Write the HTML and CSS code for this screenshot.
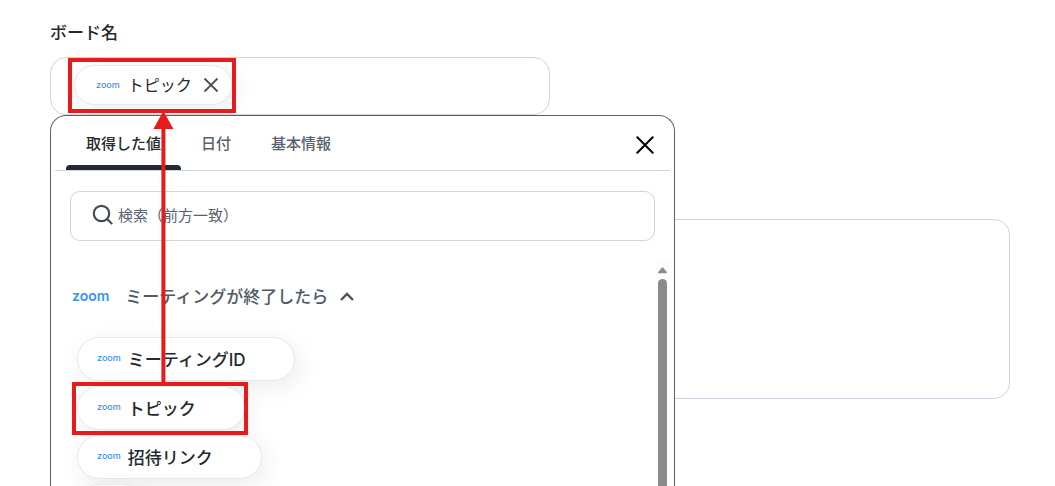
FILE: index.html
```html
<!DOCTYPE html>
<html lang="ja">
<head>
<meta charset="utf-8">
<meta name="viewport" content="width=device-width, initial-scale=1">
<title>ボード名</title>
<link rel="stylesheet" href="styles.css">
</head>
<body>
<main class="form">
  <h1 class="form-label">ボード名</h1>
  <div class="field">
    <div class="chip">
      <span class="zoom zoom-small">zoom</span>
      <span class="chip-text">トピック</span>
      <button class="icon-button" type="button" aria-label="削除">
        <svg width="16" height="16" viewBox="0 0 16 16" fill="none" stroke="#4a525c" stroke-width="1.8"><path d="M1.5 1.5l13 13M14.5 1.5l-13 13"/></svg>
      </button>
    </div>
    <section class="picker">
      <header class="tabs">
        <button class="tab tab-active" type="button">取得した値</button>
        <button class="tab" type="button">日付</button>
        <button class="tab" type="button">基本情報</button>
        <button class="icon-button close" type="button" aria-label="閉じる">
          <svg width="18" height="18" viewBox="0 0 18 18" fill="none" stroke="#000" stroke-width="2" stroke-linecap="round"><path d="M1.3 1.3l15.4 15.4M16.7 1.3L1.3 16.7"/></svg>
        </button>
      </header>
      <label class="search">
        <svg width="22" height="22" viewBox="0 0 22 22" fill="none" stroke="#434b55" stroke-width="2.2"><circle cx="9.5" cy="9.5" r="7.7"/><path d="M15 15l5.2 5"/></svg>
        <input class="search-input" type="text" aria-label="検索" placeholder="検索（前方一致）">
      </label>
      <div class="results">
        <div class="list">
          <button class="group" type="button">
            <span class="zoom">zoom</span>
            <span class="group-text">ミーティングが終了したら</span>
            <svg width="14" height="9" viewBox="0 0 14 9" fill="none" stroke="#4a525c" stroke-width="2.4"><path d="M1 8l6-6 6 6"/></svg>
          </button>
          <button class="item" type="button"><span class="zoom zoom-small">zoom</span>ミーティングID</button>
          <button class="item" type="button"><span class="zoom zoom-small">zoom</span>トピック</button>
          <button class="item" type="button"><span class="zoom zoom-small">zoom</span>招待リンク</button>
          <div class="item"></div>
        </div>
        <div class="scrollbar">
          <svg width="9" height="7" viewBox="0 0 9 7" fill="#8b8b8b"><path d="M3.8.7q.7-.8 1.4 0L8.8 5q.4 1.3-.8 1.3H1Q-.2 6.3.2 5z"/></svg>
          <div class="thumb"></div>
        </div>
      </div>
    </section>
  </div>
  <textarea class="body-field" aria-label="内容"></textarea>
</main>
<div class="mark mark-target"></div>
<div class="mark mark-source"></div>
<svg class="arrow" width="22" height="272" viewBox="0 0 22 272" fill="#e81b1b"><path d="M11.4 0l10 18h-8v254h-4V18h-8z"/></svg>
</body>
</html>
```
FILE: styles.css
```css
* {
  box-sizing: border-box;
}

body {
  margin: 0;
  height: 100vh;
  position: relative;
  overflow: hidden;
  background: #fff;
  color: #23292f;
  font-family: "Noto Sans CJK JP", sans-serif;
}

button {
  margin: 0;
  padding: 0;
  border: 0;
  background: none;
  color: inherit;
  font: inherit;
  cursor: pointer;
}

svg {
  display: block;
  flex: none;
}

.form {
  padding: 20px 45px 0 50px;
}

.form-label {
  margin: 0 0 13px;
  font-size: 17px;
  line-height: 24px;
  font-weight: 500;
}

.field {
  position: relative;
  display: flex;
  align-items: center;
  width: 100%;
  max-width: 500px;
  height: 58px;
  padding: 0 23px;
  border: 1px solid #cfd5de;
  border-radius: 16px;
}

.chip {
  display: flex;
  align-items: center;
  height: 40px;
  margin-bottom: 2px;
  padding: 0 12px 0 21px;
  border: 1px solid #e6e9ee;
  border-radius: 20px;
  background: #fff;
  box-shadow: 4px 4px 24px rgba(0, 0, 0, 0.08);
}

.chip-text {
  margin: 0 11px 0 8px;
  padding-bottom: 3px;
  font-size: 16px;
  line-height: 24px;
}

.zoom {
  color: #3b8ff5;
  font: 600 14px/20px Inter, sans-serif;
}

.zoom-small {
  padding-bottom: 1px;
  font-size: 9px;
  font-weight: 500;
}

.picker {
  position: absolute;
  top: 57px;
  left: -1px;
  width: 625px;
  max-width: calc(100vw - 60px);
  padding: 0 4px;
  border: 1px solid #59616e;
  border-bottom: 0;
  border-radius: 16px 16px 0 0;
  background: #fff;
}

.tabs {
  display: flex;
  height: 55px;
  padding: 0 16px 0 11px;
  border-bottom: 1px solid #cfd5de;
}

.tab {
  padding: 4px 20px 0;
  border-bottom: 5px solid transparent;
  color: #59616e;
  font-size: 15px;
  line-height: 46px;
  font-weight: 500;
}

.tab-active {
  position: relative;
  color: #23292f;
}

.tab-active::after {
  content: "";
  position: absolute;
  right: 0;
  bottom: -5px;
  left: 0;
  height: 5px;
  border-radius: 4px 4px 0 0;
  background: #23292f;
}

.close {
  margin: 4px 0 0 auto;
}

.search {
  display: flex;
  align-items: center;
  gap: 4px;
  height: 50px;
  margin: 20px 15px;
  padding: 0 21px 2px;
  border: 1px solid #cfd5de;
  border-radius: 10px;
}

.search-input {
  flex: 1;
  min-width: 0;
  padding: 0;
  border: 0;
  outline: 0;
  background: none;
  font: 400 15px/24px "Noto Sans CJK JP", sans-serif;
}

.search-input::placeholder {
  color: #59616e;
  opacity: 1;
}

.results {
  display: flex;
  height: calc(100vh - 261px);
  overflow: hidden;
}

.list {
  display: flex;
  flex: 1;
  flex-direction: column;
  align-items: flex-start;
  gap: 5px;
  padding: 22px 0 0 22px;
}

.group {
  display: flex;
  align-items: center;
  margin: 0 0 23px -5px;
  color: #505965;
  font-size: 17px;
  line-height: 26px;
  font-weight: 500;
}

.group-text {
  margin: 0 12px 0 16px;
}

.item {
  display: flex;
  flex: none;
  align-items: center;
  gap: 7px;
  height: 44px;
  padding: 0 48px 2px 19px;
  border: 1px solid #e6e9ee;
  border-radius: 22px;
  background: #fff;
  box-shadow: 4px 6px 24px rgba(0, 0, 0, 0.08);
  font-family: Inter, "Noto Sans CJK JP", sans-serif;
  font-size: 17px;
  font-weight: 500;
}

.scrollbar {
  display: flex;
  flex-direction: column;
  align-items: center;
  gap: 5px;
  width: 15px;
  padding-top: 6px;
  background: #fcfcfc;
}

.thumb {
  flex: 1;
  width: 9px;
  border-radius: 5px 5px 0 0;
  background: #8b8b8b;
}

.body-field {
  display: block;
  width: 100%;
  height: 180px;
  margin-top: 104px;
  border: 1px solid #cfd5de;
  border-radius: 16px;
  background: #fff;
  resize: none;
}

.mark {
  position: absolute;
  border: 4px solid #e81b1b;
  pointer-events: none;
}

.mark-target {
  top: 58px;
  left: 68px;
  width: 168px;
  height: 55px;
}

.mark-source {
  top: 382px;
  left: 72px;
  width: 176px;
  height: 53px;
}

.arrow {
  position: absolute;
  top: 111px;
  left: 152px;
  pointer-events: none;
}
```
